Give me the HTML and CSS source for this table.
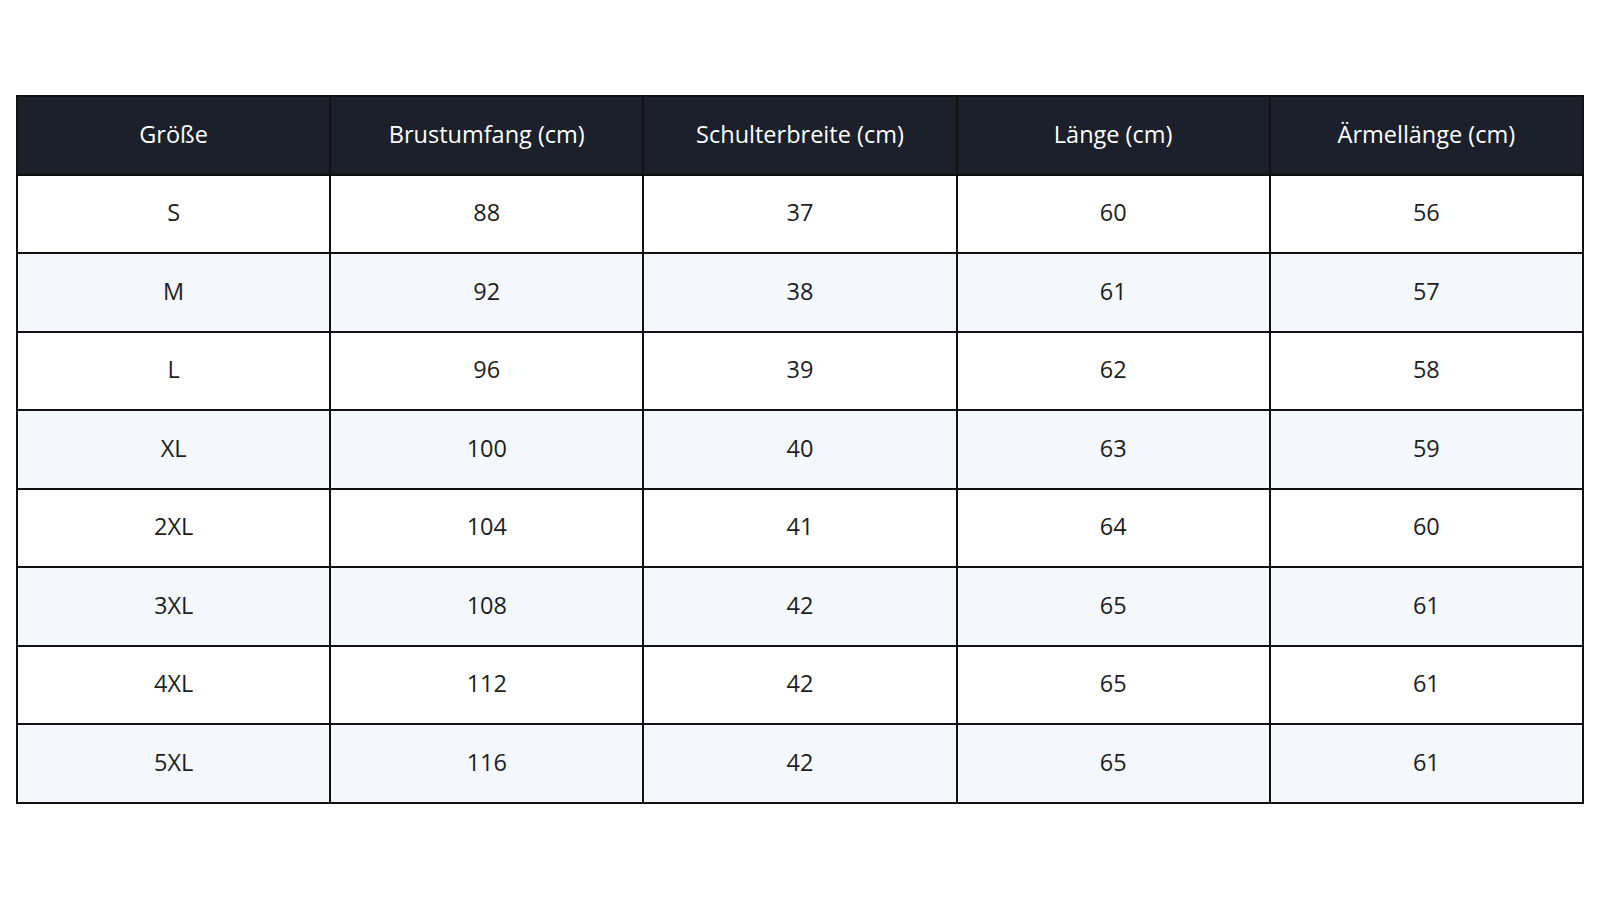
FILE: index.html
```html
<!DOCTYPE html>
<html lang="de">
<head>
<meta charset="utf-8">
<title>Größentabelle</title>
<link rel="stylesheet" href="styles.css">
</head>
<body>
<main class="page">
  <table class="size-table">
    <colgroup><col class="c"><col class="c"><col class="c"><col class="c"><col class="c"></colgroup>
    <thead>
      <tr><th>Größe</th><th>Brustumfang (cm)</th><th>Schulterbreite (cm)</th><th>Länge (cm)</th><th>Ärmellänge (cm)</th></tr>
    </thead>
    <tbody>
      <tr><td>S</td><td>88</td><td>37</td><td>60</td><td>56</td></tr>
      <tr><td>M</td><td>92</td><td>38</td><td>61</td><td>57</td></tr>
      <tr><td>L</td><td>96</td><td>39</td><td>62</td><td>58</td></tr>
      <tr><td>XL</td><td>100</td><td>40</td><td>63</td><td>59</td></tr>
      <tr><td>2XL</td><td>104</td><td>41</td><td>64</td><td>60</td></tr>
      <tr><td>3XL</td><td>108</td><td>42</td><td>65</td><td>61</td></tr>
      <tr><td>4XL</td><td>112</td><td>42</td><td>65</td><td>61</td></tr>
      <tr><td>5XL</td><td>116</td><td>42</td><td>65</td><td>61</td></tr>
    </tbody>
  </table>
</main>
</body>
</html>
```
FILE: styles.css
```css
html, body {
  margin: 0;
  padding: 0;
  background: #ffffff;
  width: 1600px;
  height: 898px;
  overflow: hidden;
}
.page {
  padding: 95px 0 0 16px;
  font-family: "Open Sans", "Noto Sans", sans-serif;
}
.size-table {
  border-collapse: collapse;
  width: 1568px;
  table-layout: fixed;
}
.size-table .c {
  width: 20%;
}
.size-table th,
.size-table td {
  border: 2px solid #111111;
  height: 78.5px;
  box-sizing: border-box;
  padding: 0 0 3px 0;
  line-height: 28px;
  text-align: center;
  vertical-align: middle;
  font-size: 23.5px;
  color: #1e1e1e;
}
.size-table th {
  background: #1c202b;
  color: #ffffff;
  font-weight: 400;
}
.size-table tbody tr:nth-child(even) td {
  background: #f4f7fb;
}
```
